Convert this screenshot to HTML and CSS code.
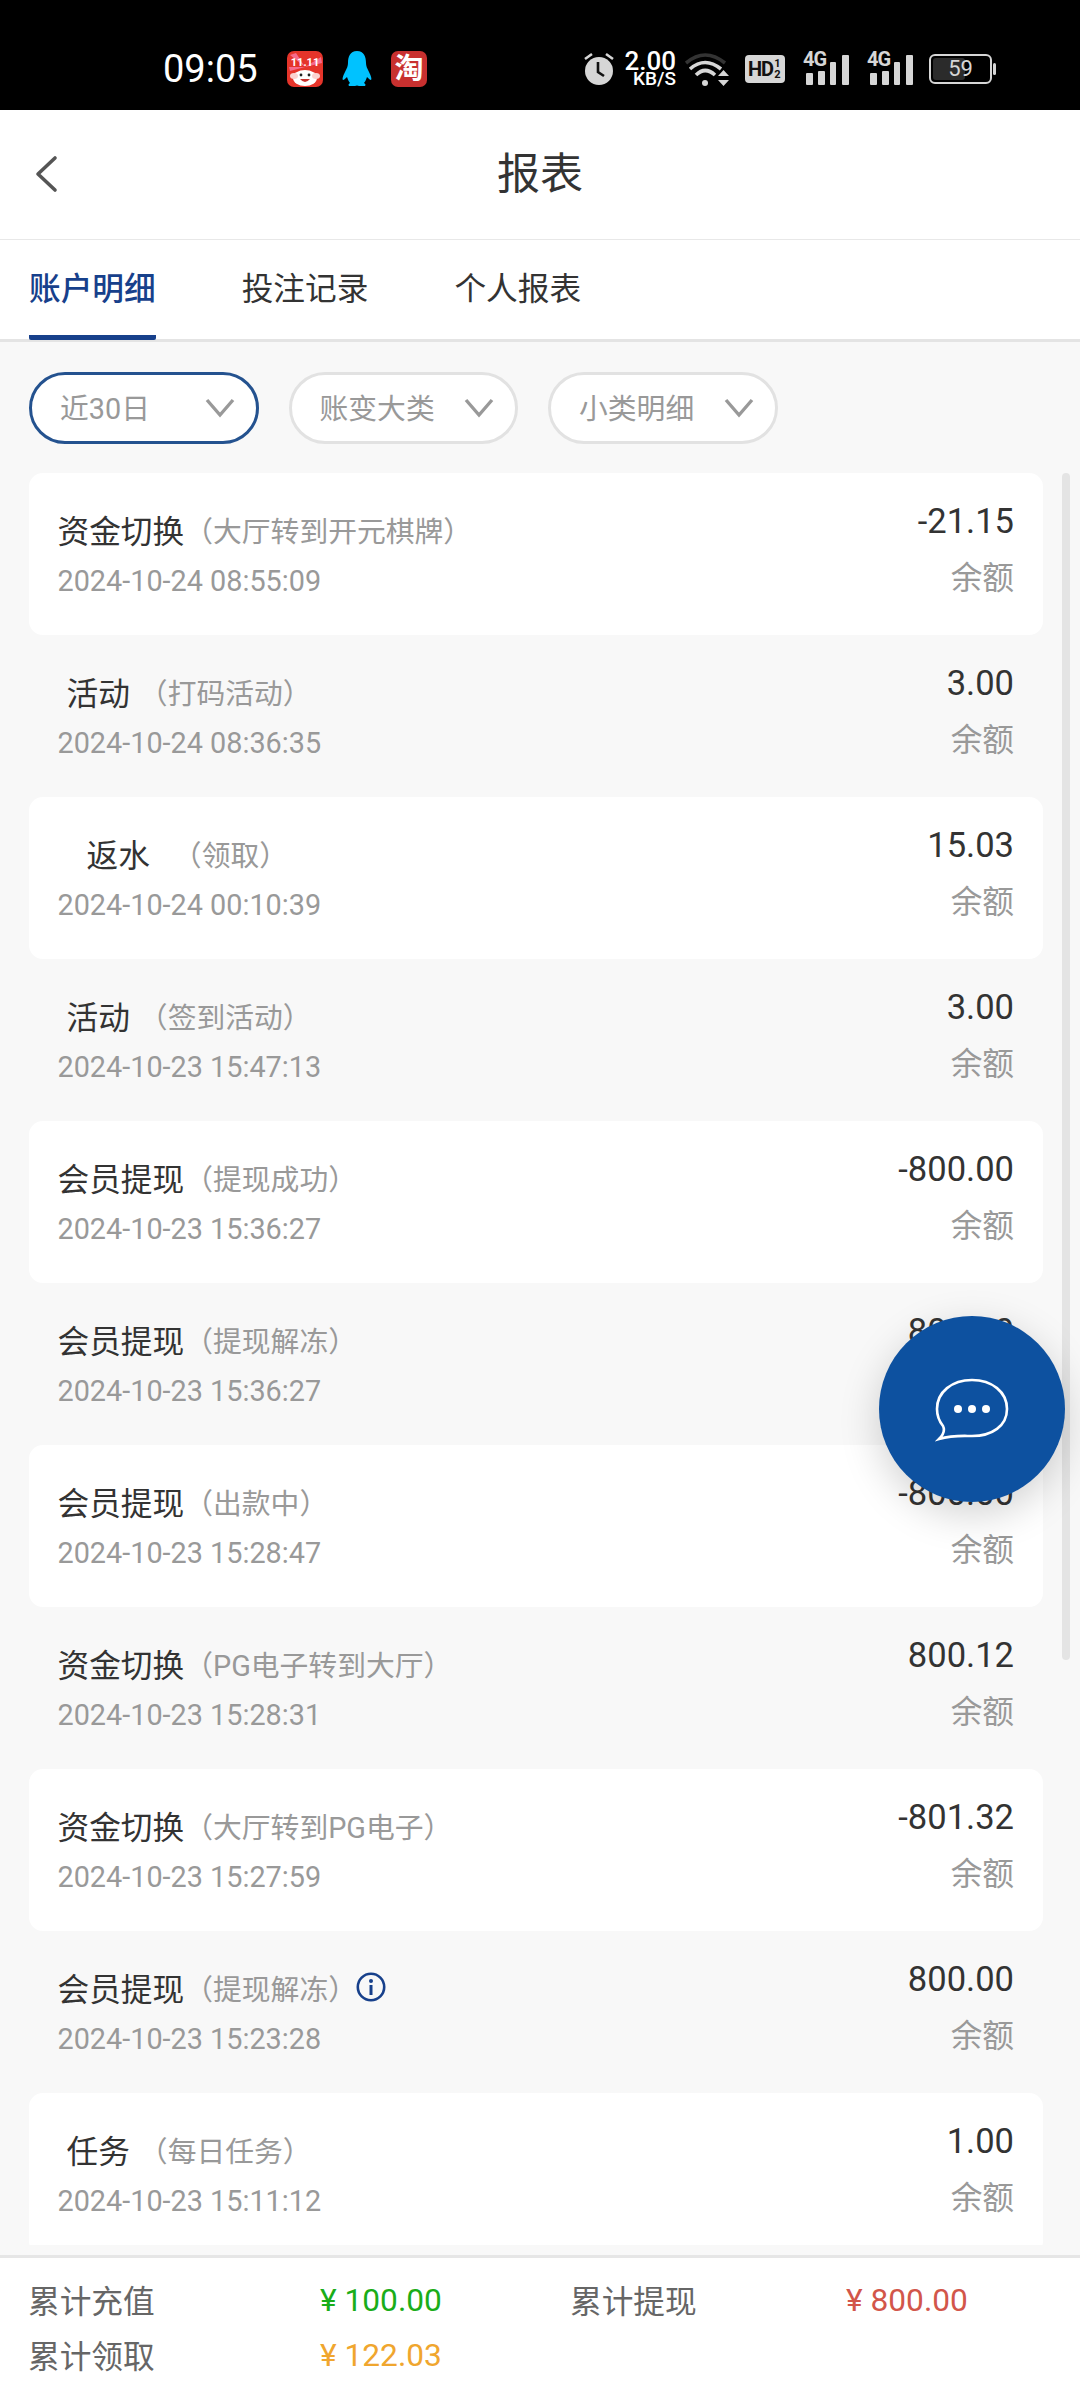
FILE: index.html
```html
<!DOCTYPE html>
<html lang="zh-CN">
<head>
  <meta charset="UTF-8">
  <title>报表</title>
  <meta name="viewport" content="width=device-width, initial-scale=1.0"/>
  <link rel="stylesheet" href="styles.css">
</head>
<body>
  <div class="status-bar">
    <span class="clock">09:05</span>
    <svg class="app-icon" width="36" height="36" viewBox="0 0 36 36">
      <rect width="36" height="36" rx="7" fill="#e5342a"/>
      <path d="M18 16 L3 4 L9 2 Z M18 16 L34 6 L35 12 Z M18 16 L2 16 L3 20 Z" fill="#f56a8c"/>
      <text x="18" y="15" class="app-icon-num">11.11</text>
      <ellipse cx="18" cy="27" rx="12" ry="8" fill="#fff"/>
      <ellipse cx="7" cy="25" rx="4" ry="3" fill="#fbd3d0"/>
      <ellipse cx="29" cy="25" rx="4" ry="3" fill="#fbd3d0"/>
      <circle cx="14" cy="24" r="1.4" fill="#222"/>
      <circle cx="22" cy="24" r="1.4" fill="#222"/>
      <path d="M13 28 Q18 34 23 28 Z" fill="#c9302c"/>
    </svg>
    <svg class="qq-icon" width="30" height="36" viewBox="0 0 30 36">
      <path d="M15 0 C8 0 6 6 6 12 C6 15 5 17 3 21 C1 25 0 28 1 29 C2 29 3 28 5 26 C6 29 7 31 8 32 C6 33 6 35 8 35 L13 35 Q15 34 17 35 L22 35 C24 35 24 33 22 32 C23 31 24 29 25 26 C27 28 28 29 29 29 C30 28 29 25 27 21 C25 17 24 15 24 12 C24 6 22 0 15 0 Z" fill="#00c2ff"/>
    </svg>
    <span class="tao-icon">淘</span>

    <div class="status-right">
      <svg class="alarm" width="30" height="34" viewBox="0 0 30 34">
        <circle cx="15" cy="19" r="14" fill="#d6d6d6"/>
        <path d="M14 10 V20 L20 24" fill="none" stroke="#111" stroke-width="2.6"/>
        <path d="M1 7 L8 2 M29 7 L22 2" stroke="#d6d6d6" stroke-width="2.6"/>
      </svg>
      <div class="net-speed"><b>2.00</b><span>KB/S</span></div>
      <svg width="45" height="34" viewBox="0 0 45 34">
        <path d="M1 11 Q20 -5 40 11" fill="none" stroke="#333" stroke-width="3.6"/>
        <path d="M5 17 Q20 4 36 17" fill="none" stroke="#d6d6d6" stroke-width="3.6"/>
        <path d="M11 23 Q20 14 30 23" fill="none" stroke="#d6d6d6" stroke-width="3.6"/>
        <circle cx="20" cy="31" r="3" fill="#d6d6d6"/>
        <path d="M33 24 H44 L38.500 18 Z M33 28 H44 L38.500 34 Z" fill="#d6d6d6"/>
      </svg>
      <div class="hd-badge"><b>HD</b><i><span>1</span><span>2</span></i></div>
      <div class="signal">
        <span class="signal-type">4G</span>
        <i class="bar bar-a"></i><i class="bar bar-b"></i><i class="bar bar-c"></i><i class="bar bar-d"></i>
      </div>
      <div class="signal">
        <span class="signal-type">4G</span>
        <i class="bar bar-a"></i><i class="bar bar-b"></i><i class="bar bar-c"></i><i class="bar bar-d"></i>
      </div>
      <div class="battery"><div class="battery-body"><span class="battery-fill"></span><span class="battery-num">59</span></div><i class="battery-cap"></i></div>
    </div>
  </div>

  <div class="top-bar">
    <div class="back">
      <svg width="24" height="38" viewBox="0 0 24 38"><path d="M21 3 L4 19 L21 35" fill="none" stroke="#555" stroke-width="3.6" stroke-linecap="round" stroke-linejoin="round"/></svg>
    </div>
    <h1>报表</h1>
  </div>

  <div class="tabs">
    <div class="tab active">账户明细</div>
    <div class="tab">投注记录</div>
    <div class="tab">个人报表</div>
  </div>

  <div class="filters">
    <div class="pill active"><span>近30日</span><svg width="30" height="20" viewBox="0 0 30 20"><path d="M2 2 L15 17 L28 2" fill="none" stroke="#999" stroke-width="3.4"/></svg></div>
    <div class="pill"><span>账变大类</span><svg width="30" height="20" viewBox="0 0 30 20"><path d="M2 2 L15 17 L28 2" fill="none" stroke="#999" stroke-width="3.4"/></svg></div>
    <div class="pill"><span>小类明细</span><svg width="30" height="20" viewBox="0 0 30 20"><path d="M2 2 L15 17 L28 2" fill="none" stroke="#999" stroke-width="3.4"/></svg></div>
  </div>

  <div class="list">
    <div class="row">
      <div class="row-left"><div class="row-title"><span class="name">资金切换</span><span class="sub">（大厅转到开元棋牌）</span></div><div class="date">2024-10-24 08:55:09</div></div>
      <div class="row-right"><div class="amount">-21.15</div><div class="balance">余额</div></div>
    </div>
    <div class="row">
      <div class="row-left"><div class="row-title"><span class="name short">活动</span><span class="sub">（打码活动）</span></div><div class="date">2024-10-24 08:36:35</div></div>
      <div class="row-right"><div class="amount">3.00</div><div class="balance">余额</div></div>
    </div>
    <div class="row">
      <div class="row-left"><div class="row-title"><span class="name wide">返水</span><span class="sub">（领取）</span></div><div class="date">2024-10-24 00:10:39</div></div>
      <div class="row-right"><div class="amount">15.03</div><div class="balance">余额</div></div>
    </div>
    <div class="row">
      <div class="row-left"><div class="row-title"><span class="name short">活动</span><span class="sub">（签到活动）</span></div><div class="date">2024-10-23 15:47:13</div></div>
      <div class="row-right"><div class="amount">3.00</div><div class="balance">余额</div></div>
    </div>
    <div class="row">
      <div class="row-left"><div class="row-title"><span class="name">会员提现</span><span class="sub">（提现成功）</span></div><div class="date">2024-10-23 15:36:27</div></div>
      <div class="row-right"><div class="amount">-800.00</div><div class="balance">余额</div></div>
    </div>
    <div class="row">
      <div class="row-left"><div class="row-title"><span class="name">会员提现</span><span class="sub">（提现解冻）</span></div><div class="date">2024-10-23 15:36:27</div></div>
      <div class="row-right"><div class="amount">800.00</div><div class="balance">余额</div></div>
    </div>
    <div class="row">
      <div class="row-left"><div class="row-title"><span class="name">会员提现</span><span class="sub">（出款中）</span></div><div class="date">2024-10-23 15:28:47</div></div>
      <div class="row-right"><div class="amount">-800.00</div><div class="balance">余额</div></div>
    </div>
    <div class="row">
      <div class="row-left"><div class="row-title"><span class="name">资金切换</span><span class="sub">（PG电子转到大厅）</span></div><div class="date">2024-10-23 15:28:31</div></div>
      <div class="row-right"><div class="amount">800.12</div><div class="balance">余额</div></div>
    </div>
    <div class="row">
      <div class="row-left"><div class="row-title"><span class="name">资金切换</span><span class="sub">（大厅转到PG电子）</span></div><div class="date">2024-10-23 15:27:59</div></div>
      <div class="row-right"><div class="amount">-801.32</div><div class="balance">余额</div></div>
    </div>
    <div class="row">
      <div class="row-left"><div class="row-title"><span class="name">会员提现</span><span class="sub">（提现解冻）</span><svg class="info" width="30" height="30" viewBox="0 0 30 30"><circle cx="15" cy="15" r="13.200" fill="none" stroke="#17408b" stroke-width="2.600"/><circle cx="15" cy="9" r="2" fill="#17408b"/><rect x="13.500" y="13" width="3" height="10" fill="#17408b"/></svg></div><div class="date">2024-10-23 15:23:28</div></div>
      <div class="row-right"><div class="amount">800.00</div><div class="balance">余额</div></div>
    </div>
    <div class="row">
      <div class="row-left"><div class="row-title"><span class="name short">任务</span><span class="sub">（每日任务）</span></div><div class="date">2024-10-23 15:11:12</div></div>
      <div class="row-right"><div class="amount">1.00</div><div class="balance">余额</div></div>
    </div>
    <i class="scroll-thumb"></i>
  </div>

  <div class="totals">
    <span class="label">累计充值</span><span class="money green">¥ 100.00</span><span class="label">累计提现</span><span class="money red">¥ 800.00</span>
    <span class="label">累计领取</span><span class="money orange">¥ 122.03</span>
  </div>

  <!-- floating customer service button -->
  <div class="chat-btn">
    <svg width="74" height="64" viewBox="0 0 74 64">
      <path d="M4 61 C9 56 10 52 8 48 C4 43 2 37 2 31 C2 14 17 2 37 2 C57 2 72 14 72 31 C72 48 57 58 37 58 C28 58 18 57 4 61 Z" fill="none" stroke="#fff" stroke-width="2.6"/>
      <circle cx="23" cy="31" r="4" fill="#fff"/>
      <circle cx="37" cy="31" r="4" fill="#fff"/>
      <circle cx="51" cy="31" r="4" fill="#fff"/>
    </svg>
  </div>
</body>
</html>
```
FILE: styles.css
```css
* {
  box-sizing: border-box;
}
body {
  margin: 0;
  width: 1080px;
  height: 2400px;
  position: relative;
  overflow: hidden;
  display: flex;
  flex-direction: column;
  background: #f8f8f8;
  color: #333;
  font-family: Roboto, "Noto Sans CJK SC", sans-serif;
}

/* status bar */
.status-bar {
  height: 110px;
  flex-shrink: 0;
  background: #000;
  display: flex;
  align-items: center;
  padding: 28px 84px 0 163px;
}
.clock {
  color: #fff;
  font-size: 38px;
  width: 124px;
}
.app-icon {
  margin-right: 19px;
}
.app-icon-num {
  font-size: 11px;
  font-weight: 700;
  fill: #fff;
  text-anchor: middle;
}
.qq-icon {
  margin-right: 19px;
}
.tao-icon {
  width: 36px;
  height: 36px;
  border-radius: 7px;
  background: #c8302f;
  color: #fff;
  font-size: 29px;
  font-weight: 700;
  line-height: 36px;
  text-align: center;
}
.status-right {
  margin-left: auto;
  display: flex;
  align-items: center;
  color: #d6d6d6;
}
.alarm {
  margin-right: 8px;
}
.net-speed {
  width: 54px;
  margin-right: 9px;
  color: #fff;
  display: flex;
  flex-direction: column;
  align-items: flex-end;
  font-size: 19px;
  line-height: 16px;
  font-weight: 500;
}
.net-speed b {
  font-size: 26px;
  line-height: 20px;
  font-weight: 500;
}
.hd-badge {
  margin-left: 15px;
  width: 40px;
  height: 28px;
  background: #d6d6d6;
  border-radius: 4px;
  color: #111;
  display: flex;
  align-items: center;
  padding-left: 3px;
  overflow: hidden;
}
.hd-badge b {
  font-size: 20px;
  letter-spacing: -1px;
}
.hd-badge i {
  display: flex;
  flex-direction: column;
  font-style: normal;
  font-weight: 700;
  font-size: 11px;
  line-height: 11px;
  margin-left: 1px;
}
.signal {
  margin-left: 18px;
  width: 46px;
  height: 32px;
  display: flex;
  align-items: flex-end;
  gap: 5px;
  padding-left: 3px;
  position: relative;
}
.signal-type {
  position: absolute;
  left: 0;
  top: -4px;
  font-size: 20px;
  line-height: 20px;
  font-weight: 700;
  letter-spacing: -1px;
}
.bar {
  width: 7px;
  background: #d6d6d6;
  border-radius: 1px;
}
.bar-a { height: 12px; }
.bar-b { height: 14px; }
.bar-c { height: 23px; }
.bar-d { height: 30px; margin-left: 1px; }
.battery {
  margin-left: 16px;
  display: flex;
  align-items: center;
  gap: 1px;
}
.battery-body {
  width: 63px;
  height: 30px;
  border: 2px solid #d6d6d6;
  border-radius: 6px;
  padding: 2px;
  position: relative;
}
.battery-fill {
  display: block;
  width: 59%;
  height: 100%;
  background: #2b2b2b;
  border-radius: 3px;
}
.battery-num {
  position: absolute;
  left: 0;
  right: 0;
  top: 0;
  bottom: 0;
  text-align: center;
  font-size: 22px;
  line-height: 26px;
}
.battery-cap {
  width: 3px;
  height: 12px;
  background: #d6d6d6;
  border-radius: 2px;
}

/* title bar */
.top-bar {
  height: 130px;
  flex-shrink: 0;
  background: #fff;
  border-bottom: 1px solid #e8e8e8;
  display: flex;
  align-items: center;
  justify-content: center;
  position: relative;
}
.top-bar h1 {
  margin: 0;
  font-size: 43px;
  font-weight: 400;
  color: #333;
  position: relative;
  top: -5px;
}
.back {
  position: absolute;
  left: 34px;
  top: 45px;
  line-height: 0;
}

/* tabs */
.tabs {
  height: 102px;
  flex-shrink: 0;
  background: #fff;
  border-bottom: 3px solid #e4e4e4;
  display: flex;
  gap: 86px;
  padding-left: 29px;
}
.tab {
  height: 100px;
  font-size: 31.680px;
  line-height: 99px;
  color: #333;
}
.tab.active {
  color: #17408b;
  font-weight: 500;
  border-bottom: 5px solid #17408b;
  border-radius: 2px;
}

/* filter pills */
.filters {
  height: 131px;
  flex-shrink: 0;
  display: flex;
  gap: 30px;
  padding: 30px 0 0 29px;
}
.pill {
  width: 229.500px;
  height: 72px;
  border: 3px solid #e2e2e2;
  border-radius: 36px;
  background: #fff;
  display: flex;
  align-items: center;
  justify-content: space-between;
  padding: 0 21px 3px 28px;
  font-size: 28.800px;
  color: #999;
}
.pill svg {
  margin-top: 3px;
}
.pill.active {
  border-color: #24528f;
}

/* record list */
.list {
  flex: 1;
  min-height: 0;
  overflow: hidden;
  position: relative;
  margin-bottom: 10px;
}
.row {
  margin: 0 37px 0 29px;
  height: 162px;
  border-radius: 14px;
  display: flex;
  justify-content: space-between;
  padding: 0 29px 0 28.500px;
}
.row:nth-child(odd) {
  background: #fff;
}
.row-title {
  margin-top: 34px;
  height: 44px;
  display: flex;
  align-items: center;
}
.name {
  font-size: 31.680px;
  color: #333;
}
.name.short {
  padding: 0 9px 0 9px;
}
.name.wide {
  padding: 0 23px 0 29px;
}
.sub {
  font-size: 28.800px;
  color: #999;
}
.info {
  margin-left: -1px;
}
.date {
  margin-top: 10px;
  font-size: 28.800px;
  line-height: 40px;
  color: #999;
}
.row-right {
  text-align: right;
}
.amount {
  margin-top: 27px;
  font-size: 34.560px;
  line-height: 42px;
  color: #333;
}
.balance {
  margin-top: 16px;
  font-size: 31.680px;
  line-height: 42px;
  color: #999;
}
.scroll-thumb {
  position: absolute;
  left: 1062px;
  top: 0;
  width: 8px;
  height: 1187px;
  background: #e4e4e4;
  border-radius: 4px;
}

/* totals footer */
.totals {
  height: 145px;
  flex-shrink: 0;
  background: #fff;
  border-top: 3px solid #e6e6e6;
  display: grid;
  grid-template-columns: 292px 250px 276px 1fr;
  grid-auto-rows: 55px;
  align-items: center;
  padding: 13px 0 0 28px;
  font-size: 31.680px;
}
.label {
  color: #666;
}
.money {
  padding-top: 3px;
}
.green { color: #1aad19; }
.red { color: #d2564a; }
.orange { color: #f0a62e; }

/* floating chat button */
.chat-btn {
  position: absolute;
  left: 879px;
  top: 1316px;
  width: 186px;
  height: 186px;
  border-radius: 50%;
  background: #0d51a0;
  box-shadow: 0 12px 40px rgba(0, 0, 0, 0.18);
  display: flex;
  align-items: center;
  justify-content: center;
  padding-top: 2px;
}
```
